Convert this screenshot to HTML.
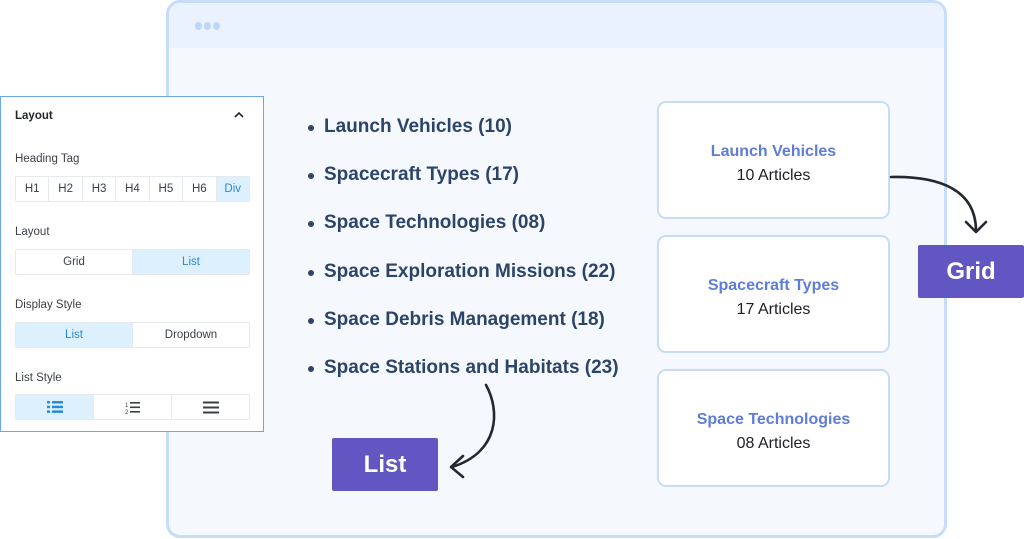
<!DOCTYPE html>
<html><head><meta charset="utf-8"><style>
*{margin:0;padding:0;box-sizing:border-box}
body{width:1024px;height:539px;background:#fff;position:relative;overflow:hidden;font-family:"Liberation Sans",Arial,sans-serif}
.win{position:absolute;left:166px;top:0;width:781px;height:538px;border:3px solid #c7dcf7;border-radius:14px;background:#f5f9fe;overflow:hidden}
.hdr{height:45px;background:#eaf2fe}
.dot{position:absolute;top:19px;width:7px;height:8px;border-radius:50%;background:#c0d6f5}
.li{position:absolute;left:324px;font-size:19px;font-weight:bold;color:#2c4468;white-space:nowrap}
.li:before{content:"";position:absolute;left:-16px;top:9px;width:6px;height:6px;border-radius:50%;background:#2c4468}
.card{position:absolute;left:657px;width:233px;height:118px;background:#fff;border:2.5px solid #c7dcf7;border-radius:9px;text-align:center;padding-top:40px}
.card .t{color:#5577d6;font-size:16px;font-weight:bold;opacity:.95}
.card .s{color:#1c1f26;font-size:16px;margin-top:6px}
.btn{position:absolute;background:#6257c2;color:#fff;font-weight:bold;font-size:24px;display:flex;align-items:center;justify-content:center;border-radius:2px}
.panel{position:absolute;left:0;top:96px;width:264px;height:336px;background:#fff;border:1.5px solid #6ea6ee}
.lbl{position:absolute;left:14px;font-size:11.5px;color:#3b3f45}
.grp{position:absolute;left:14px;width:235px;height:26px;border:1px solid #e6e9ee;border-radius:2px;display:flex;background:#fff}
.grp div{flex:1;display:flex;align-items:center;justify-content:center;font-size:11.5px;color:#3b3f45;border-right:1px solid #e6e9ee}
.grp div:last-child{border-right:none}
.grp .on{background:#dcf0fd;color:#2a8ad6}
</style></head><body>
<div class="win"><div class="hdr"></div>
<div class="dot" style="left:26px"></div><div class="dot" style="left:35px"></div><div class="dot" style="left:44px"></div>
</div>
<div class="li" style="top:116px">Launch Vehicles (10)</div>
<div class="li" style="top:164px">Spacecraft Types (17)</div>
<div class="li" style="top:212px">Space Technologies (08)</div>
<div class="li" style="top:261px">Space Exploration Missions (22)</div>
<div class="li" style="top:309px">Space Debris Management (18)</div>
<div class="li" style="top:357px">Space Stations and Habitats (23)</div>
<div class="card" style="top:101px"><div class="t">Launch Vehicles</div><div class="s">10 Articles</div></div>
<div class="card" style="top:235px"><div class="t">Spacecraft Types</div><div class="s">17 Articles</div></div>
<div class="card" style="top:369px"><div class="t">Space Technologies</div><div class="s">08 Articles</div></div>
<div class="btn" style="left:918px;top:245px;width:106px;height:53px">Grid</div>
<div class="btn" style="left:332px;top:438px;width:106px;height:53px">List</div>
<svg style="position:absolute;left:0;top:0" width="1024" height="539" fill="none" stroke="#23272e" stroke-width="2.6" stroke-linecap="round" stroke-linejoin="round">
<path d="M486 385 C500 410 500 452 452 467"/><path d="M463 456 L451 467 L463 477"/>
<path d="M891 177 C940 176 976 190 976 231"/><path d="M966 222 L976 232 L986 222"/>
</svg>
<div class="panel">
<div class="lbl" style="top:13px;font-weight:bold;color:#23262b">Layout</div>
<svg style="position:absolute;left:232px;top:14px" width="12" height="8"><path d="M2 6 L6 2 L10 6" stroke="#23262b" stroke-width="1.6" fill="none"/></svg>
<div class="lbl" style="top:56px">Heading Tag</div>
<div class="grp" style="top:79px"><div>H1</div><div>H2</div><div>H3</div><div>H4</div><div>H5</div><div>H6</div><div class="on">Div</div></div>
<div class="lbl" style="top:129px">Layout</div>
<div class="grp" style="top:152px"><div>Grid</div><div class="on">List</div></div>
<div class="lbl" style="top:202px">Display Style</div>
<div class="grp" style="top:225px"><div class="on">List</div><div>Dropdown</div></div>
<div class="lbl" style="top:275px">List Style</div>
<div class="grp" style="top:297px">
<div class="on"><svg width="16" height="12"><g fill="#2a8ad6"><rect x="0" y="0" width="3" height="2.5"/><rect x="0" y="4.7" width="3" height="2.5"/><rect x="0" y="9.4" width="3" height="2.5"/><rect x="5" y="0" width="11" height="2.5"/><rect x="5" y="4.7" width="11" height="2.5"/><rect x="5" y="9.4" width="11" height="2.5"/></g></svg></div>
<div><svg width="16" height="13"><text x="0" y="6" font-size="6" fill="#3b3f45" font-family="Liberation Sans">1</text><text x="0" y="13" font-size="6" fill="#3b3f45" font-family="Liberation Sans">2</text><g fill="#3b3f45"><rect x="5" y="1" width="10" height="1.6"/><rect x="5" y="5.5" width="10" height="1.6"/><rect x="5" y="10" width="10" height="1.6"/></g></svg></div>
<div><svg width="16" height="13"><g fill="#3b3f45"><rect x="0" y="0.5" width="16" height="2"/><rect x="0" y="5.5" width="16" height="2"/><rect x="0" y="10.5" width="16" height="2"/></g></svg></div>
</div>
</div>
</body></html>
